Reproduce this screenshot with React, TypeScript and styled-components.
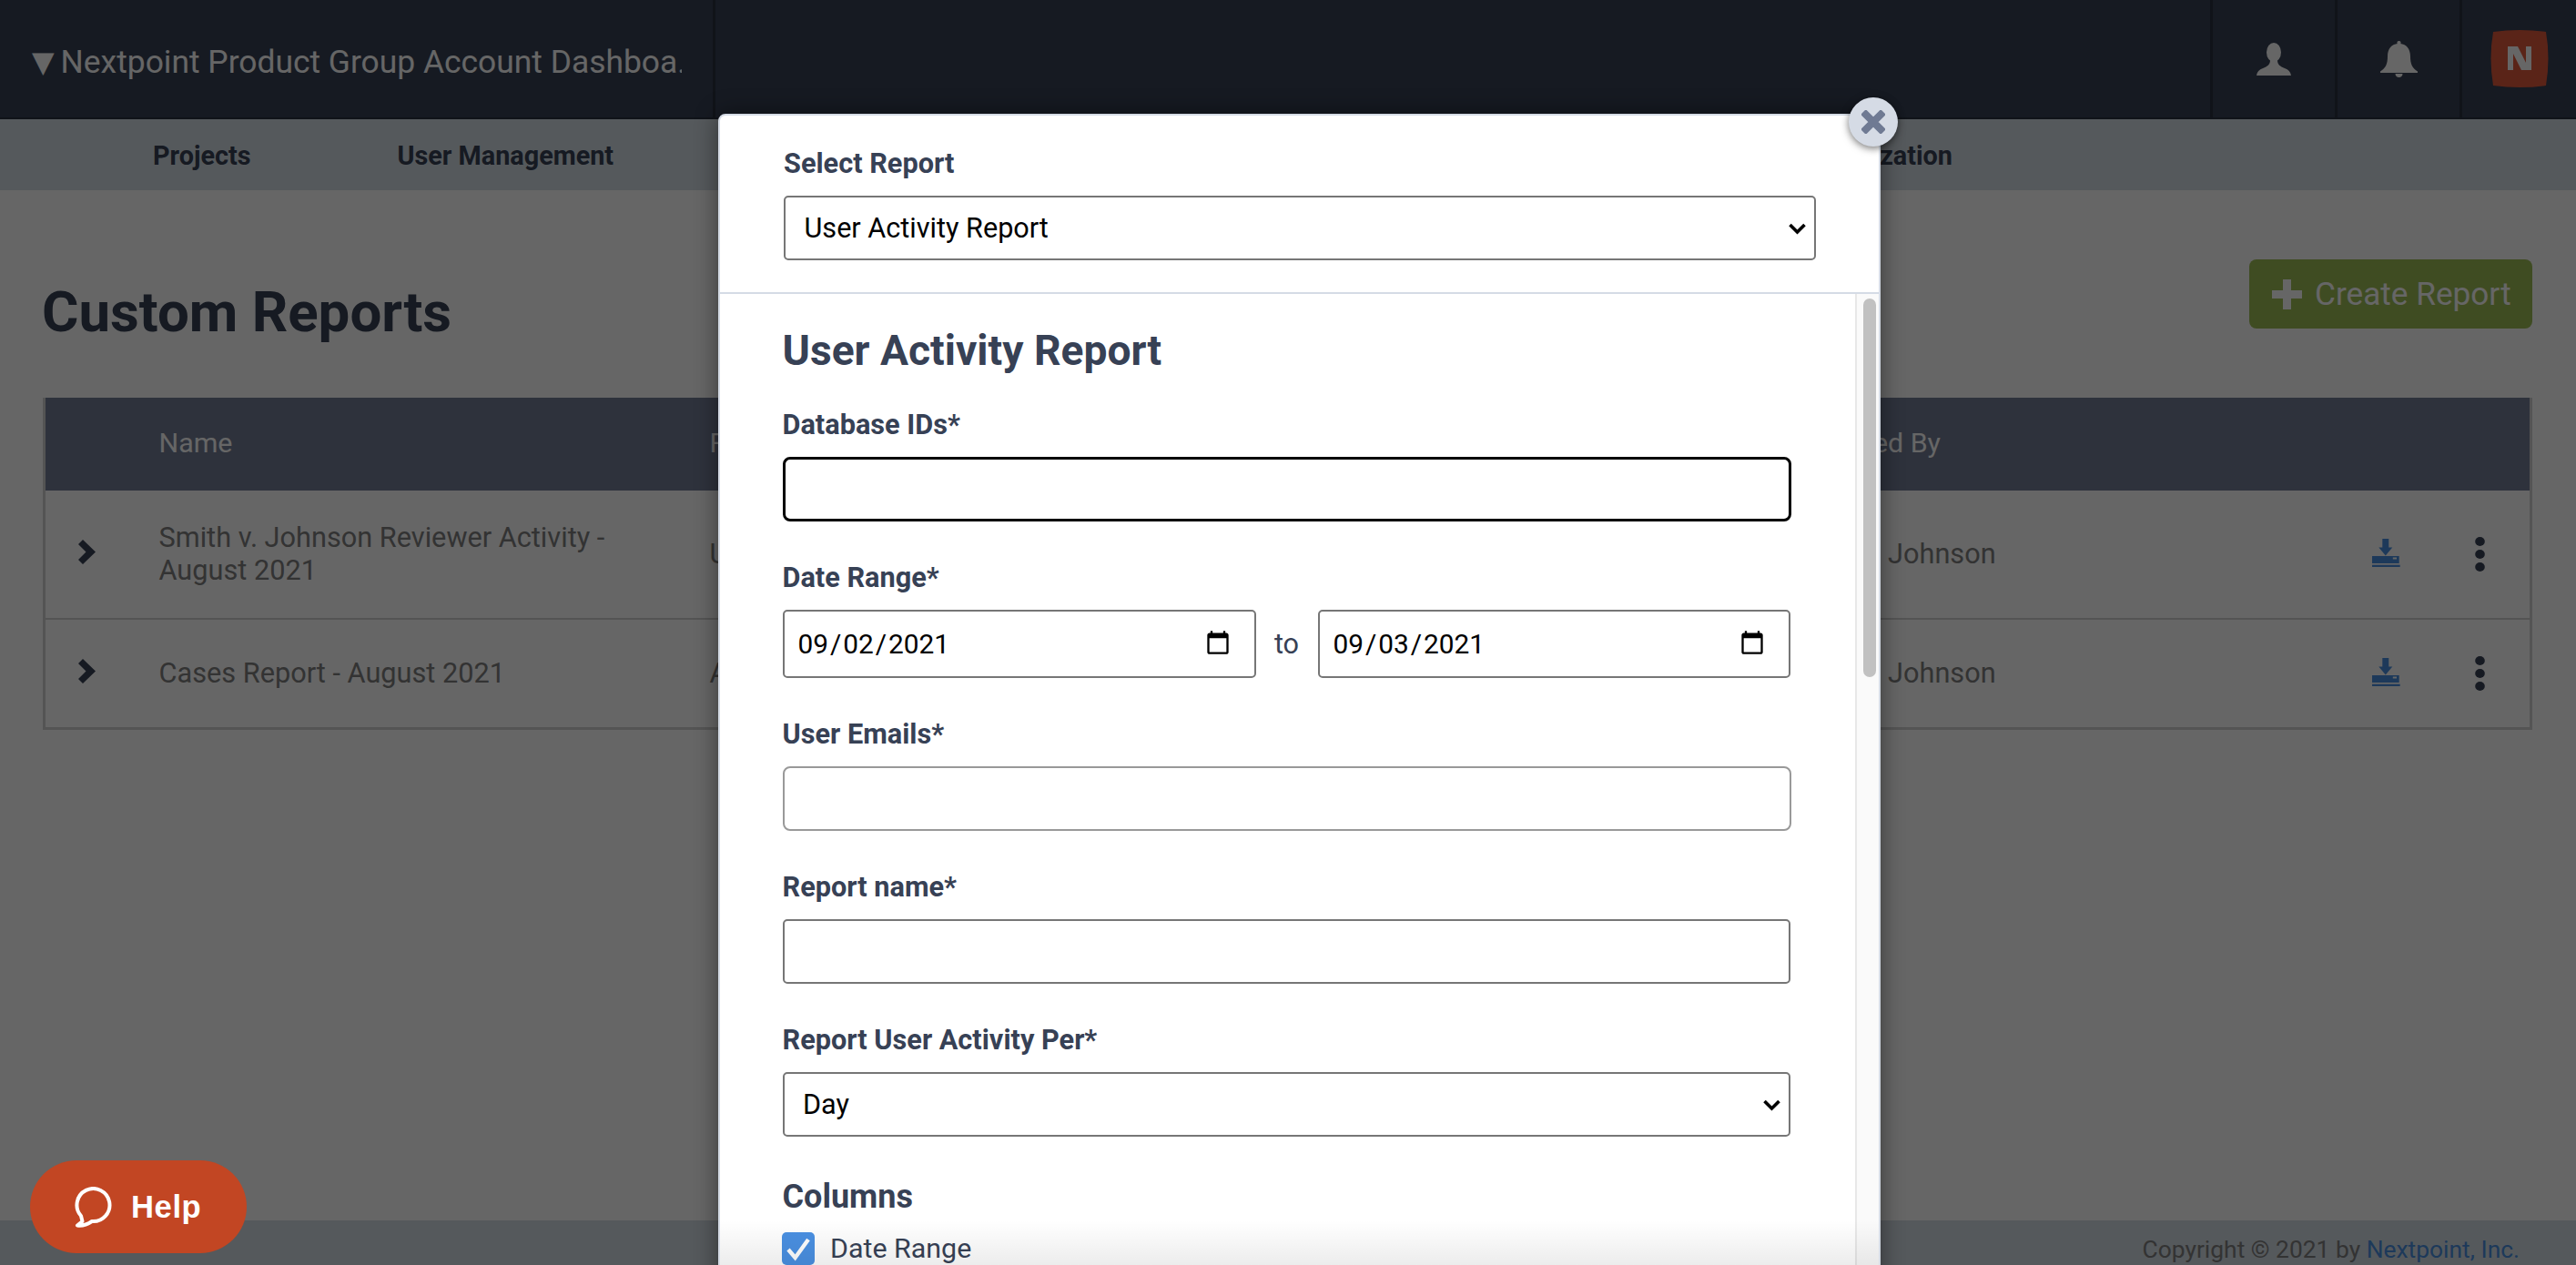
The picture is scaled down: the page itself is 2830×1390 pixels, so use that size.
import React from "react";
import styled, { createGlobalStyle } from "styled-components";

const GlobalStyle = createGlobalStyle`
  html, body {
    margin: 0;
    padding: 0;
    overflow: hidden;
    background: #fff;
  }
  * {
    box-sizing: border-box;
  }
`;

// the reference is a retina capture: everything below is in css px, doubled here
const Page = styled.div`
  zoom: 2;
  position: relative;
  width: 1415px;
  height: 695px;
  overflow: hidden;
  display: flex;
  flex-direction: column;
  font-family: Roboto, "Liberation Sans", sans-serif;
  color: #374155;
`;

const Header = styled.header`
  flex: 0 0 65.5px;
  display: flex;
  background: #374155;
  border-bottom: 1px solid #283040;
`;

const AccountTitle = styled.div`
  width: 393px;
  padding: 3.5px 0 0 17.5px;
  border-right: 1.5px solid #283040;
  display: flex;
  align-items: center;
  gap: 3.5px;
`;

const TitleText = styled.div`
  width: 341px;
  overflow: hidden;
  white-space: nowrap;
  color: #fff;
  font-size: 17.7px;
`;

const Triangle = styled.span`
  color: #fff;
  font-family: "DejaVu Sans", sans-serif;
  font-size: 16px;
`;

const HeaderSpacer = styled.div`
  flex: 1;
`;

const IconCell = styled.div<{ $width: number }>`
  width: ${(p) => p.$width}px;
  border-left: 1.5px solid #283040;
  display: flex;
  align-items: center;
  justify-content: center;
`;

const Nav = styled.nav`
  flex: 0 0 39px;
  display: flex;
  align-items: center;
  gap: 80.5px;
  padding: 1px 342.5px 0 84px;
  background: #d5dee6;
  font-size: 14.4px;
  font-weight: 700;
  white-space: nowrap;
`;

const LastNavItem = styled.span`
  margin-left: auto;
`;

const Main = styled.main`
  flex: 1;
  padding: 38px 24px 0;
  background: #fff;
`;

const TitleRow = styled.div`
  display: flex;
  justify-content: space-between;
  align-items: flex-start;
`;

const PageTitle = styled.h1`
  margin: 11px 0 0 -1px;
  font-size: 30.9px;
  line-height: 36px;
  font-weight: 700;
`;

const CreateButton = styled.button`
  width: 155.5px;
  height: 38px;
  padding: 0 0 0 12.5px;
  display: flex;
  align-items: center;
  gap: 7px;
  border: 0;
  border-radius: 4px;
  background: #9ebe55;
  color: #fff;
  font-family: inherit;
  font-size: 17.6px;
`;

const Table = styled.div`
  margin: 29px 0 0 -0.5px;
  border: 1.5px solid #d2d2d2;
  border-top: 0;
`;

const gridColumns = "62.25px 302.5px 603px 1fr 46px 55px";

const TableHead = styled.div`
  display: grid;
  grid-template-columns: ${gridColumns};
  align-items: center;
  height: 51px;
  padding-bottom: 2px;
  background: #737d96;
  color: #fff;
  font-size: 15.2px;
`;

const TableRow = styled.div<{ $height: number }>`
  display: grid;
  grid-template-columns: ${gridColumns};
  align-items: center;
  height: ${(p) => p.$height}px;
  color: #808080;
  font-size: 15.35px;
  line-height: 18px;
  & + & {
    border-top: 1.25px solid #d2d2d2;
  }
`;

const ChevronCell = styled.div`
  display: flex;
  margin-top: -2.5px;
  padding-left: 18px;
`;

const NameCell = styled.div`
  padding-right: 24px;
`;

const DownloadCell = styled.div`
  display: flex;
  justify-content: center;
  margin: -2px 2px 0 0;
`;

const KebabCell = styled.div`
  display: flex;
  justify-content: center;
`;

const Footer = styled.footer`
  flex: 0 0 24.5px;
  padding: 7.5px 31px 0 0;
  text-align: right;
  background: #d5dee6;
  color: #808080;
  font-size: 13.2px;
  line-height: 17px;
  white-space: nowrap;
`;

const FooterLink = styled.a`
  color: #4a90e2;
`;

const Backdrop = styled.div`
  position: absolute;
  inset: 0;
  background: rgba(0, 0, 0, 0.6);
`;

const Modal = styled.div`
  position: absolute;
  left: 394.5px;
  top: 62.5px;
  width: 638.5px;
  height: 700px;
  display: flex;
  flex-direction: column;
  background: #fff;
  border: 1px solid #d5dbe5;
  border-radius: 4px 4px 0 0;
  box-shadow: 0 0 13px rgba(0, 0, 0, 0.45);
`;

const CloseButton = styled.button`
  position: absolute;
  top: -10px;
  right: -10.5px;
  width: 27px;
  height: 27px;
  padding: 0;
  display: flex;
  align-items: center;
  justify-content: center;
  border: 0;
  border-radius: 50%;
  background: #d5dbe5;
  box-shadow: 0 1px 4px rgba(0, 0, 0, 0.55);
`;

const ModalHead = styled.div`
  flex: 0 0 auto;
  padding: 17.25px 20px 17.5px 35px;
  border-bottom: 1px solid #d5dbe5;
`;

const ModalBody = styled.div`
  flex: 1;
  display: flex;
  overflow: hidden;
`;

const FormArea = styled.div`
  flex: 1;
  padding: 17px 0 0 34.25px;
`;

const ScrollTrack = styled.div`
  flex: 0 0 13px;
  padding: 2.5px 1.5px 0 3.5px;
  background: #fafafa;
  border-left: 1px solid #e8e8e8;
`;

const ScrollThumb = styled.div`
  height: 208px;
  border-radius: 4px;
  background: #c1c1c1;
`;

const FormTitle = styled.h2`
  margin: 0 0 18px;
  font-size: 23.1px;
  line-height: 28px;
  font-weight: 700;
`;

const Field = styled.div`
  margin-bottom: 22px;
`;

const Label = styled.label`
  display: block;
  margin-bottom: 8.5px;
  font-size: 15.35px;
  line-height: 18px;
  font-weight: 700;
`;

const controlBase = `
  display: block;
  height: 35.5px;
  margin: 0;
  background: #fff;
  color: #000;
  font-family: Roboto, "Liberation Sans", sans-serif;
  font-size: 15.3px;
`;

const SelectWrap = styled.div<{ $width: number }>`
  position: relative;
  width: ${(p) => p.$width}px;
`;

const Select = styled.select`
  ${controlBase}
  width: 100%;
  padding: 0 0 0 10.25px;
  border: 1px solid #767676;
  border-radius: 2.5px;
  appearance: none;
`;

const SelectArrow = styled.svg`
  position: absolute;
  top: 15px;
  right: 5.5px;
  pointer-events: none;
`;

const TextInput = styled.input<{ $width: number; $tone: "focus" | "soft" | "plain" }>`
  ${controlBase}
  width: ${(p) => p.$width}px;
  outline: none;
  border: ${(p) =>
    p.$tone === "focus" ? "1.5px solid #000" : p.$tone === "soft" ? "1px solid #999" : "1px solid #767676"};
  border-radius: ${(p) => (p.$tone === "plain" ? "2.5px" : "4px")};
`;

const DateRow = styled.div`
  display: flex;
  align-items: center;
`;

const DateInput = styled.input<{ $width: number }>`
  ${controlBase}
  height: 37.5px;
  width: ${(p) => p.$width}px;
  padding: 0 10.5px 0 6.5px;
  border: 1px solid #767676;
  border-radius: 2.5px;
  font-size: 14.9px;
`;

const ToText = styled.span`
  width: 34px;
  text-align: center;
  font-size: 15.3px;
`;

const ColumnsTitle = styled.h3`
  margin: 0 0 8.5px;
  font-size: 18px;
  line-height: 22px;
  font-weight: 700;
`;

const CheckRow = styled.div`
  display: flex;
  align-items: center;
  gap: 8.5px;
  margin-left: -0.25px;
  font-size: 15.2px;
`;

const CheckBox = styled.span`
  width: 18px;
  height: 18px;
  display: flex;
  align-items: center;
  justify-content: center;
  border-radius: 2.5px;
  background: #4a90e2;
`;

const BottomFade = styled.div`
  position: absolute;
  left: 0;
  right: 0;
  top: 607px;
  height: 26px;
  background: linear-gradient(rgba(0, 0, 0, 0), rgba(0, 0, 0, 0.08));
`;

const HelpButton = styled.button`
  position: absolute;
  left: 16.5px;
  top: 637.5px;
  width: 119px;
  height: 51px;
  padding: 0 0 0 24.5px;
  display: flex;
  align-items: center;
  gap: 10.5px;
  border: 0;
  border-radius: 26px;
  background: #c24623;
  color: #fff;
  font-family: "Liberation Sans", Arial, sans-serif;
  font-size: 17.3px;
  font-weight: 700;
  letter-spacing: 0.3px;
`;

const UserIcon = () => (
  <svg width="19" height="18" viewBox="0 0 38 36" fill="#fff">
    <ellipse cx="19" cy="10.5" rx="8" ry="10.5" />
    <path d="M15 19 C15 24 12 26 7 28 C3 29.5 0.5 32 0 36 H38 C37.5 32 35 29.5 31 28 C26 26 23 24 23 19 Z" />
  </svg>
);

const BellIcon = () => (
  <svg width="20.5" height="20" viewBox="0 0 41 40" fill="#fff">
    <rect x="18.5" y="0" width="4" height="5" rx="1.5" />
    <path d="M20.5 3 C12 3 8 9 8 17 C8 25 6 30 0 33.5 V35 H41 V33.5 C35 30 33 25 33 17 C33 9 29 3 20.5 3 Z" />
    <path d="M16.5 36 H24.5 C24.5 38.5 22.5 40 20.5 40 C18.5 40 16.5 38.5 16.5 36 Z" />
  </svg>
);

const BrandLogo = () => (
  <svg width="33" height="32.5" viewBox="0 0 66 65">
    <path d="M4 3 Q33 -1 62 3 Q67 32 62 62 Q33 66 4 62 Q-1 32 4 3 Z" fill="#e15a3c" />
    <path d="M20 19 H31 L40 37 V19 H46 V45 H35 L26 27 V45 H20 Z" fill="#fff" />
  </svg>
);

const PlusIcon = () => (
  <svg width="16.5" height="16.5" viewBox="0 0 33 33" fill="#fff">
    <path d="M12 0 H21 V12 H33 V21 H21 V33 H12 V21 H0 V12 H12 Z" />
  </svg>
);

const CloseIcon = () => (
  <svg width="13" height="13" viewBox="0 0 26 26" stroke="#6f7a93" strokeWidth="8">
    <path d="M2 2 L24 24 M24 2 L2 24" />
  </svg>
);

const Chevron = () => (
  <svg width="9.5" height="13.5" viewBox="0 0 19 27" fill="#374155">
    <path d="M0 5 L5 0 L19 13.5 L5 27 L0 22 L8.5 13.5 Z" />
  </svg>
);

const DownloadIcon = () => (
  <svg width="15.5" height="15.5" viewBox="0 0 31 31" fill="#4a90e2">
    <path d="M11.3 0 H18.3 V9.5 H22.3 L14.8 18.5 L7.3 9.5 H11.3 Z" />
    <path fillRule="evenodd" d="M0 19 H29.7 V27 H0 Z M22.8 20.5 V22.5 H27 V20.5 Z" />
    <rect x="0" y="28.7" width="30.7" height="2.3" />
  </svg>
);

const KebabIcon = () => (
  <svg width="5.5" height="19" viewBox="0 0 11 38" fill="#374155">
    <ellipse cx="5.5" cy="5" rx="5.3" ry="5" />
    <ellipse cx="5.5" cy="19" rx="5.3" ry="5" />
    <ellipse cx="5.5" cy="33" rx="5.3" ry="5" />
  </svg>
);

const CheckMark = () => (
  <svg width="15" height="15" viewBox="0 0 15 15" fill="none" stroke="#fff" strokeWidth="2.2">
    <path d="M2 8 L5.8 12.5 L13 2.5" />
  </svg>
);

const ChatIcon = () => (
  <svg width="20.5" height="22.5" viewBox="0 0 41 45" fill="none" stroke="#fff" strokeWidth="4" strokeLinejoin="round">
    <path d="M19 38 A18 18 0 1 0 7 32 L8.5 38 L3 42.5 Q11 43.5 19 38 Z" />
  </svg>
);

const FormSelect = ({ width, label }: { width: number; label: string }) => (
  <SelectWrap $width={width}>
    <Select defaultValue={label}>
      <option value={label}>{label}</option>
    </Select>
    <SelectArrow width="9.5" height="6.5" viewBox="0 0 19 13" fill="none" stroke="#000" strokeWidth="3.6">
      <path d="M1.5 2 L9.5 10 L17.5 2" />
    </SelectArrow>
  </SelectWrap>
);

const reports = [
  { name: "Smith v. Johnson Reviewer Activity - August 2021", type: "User", owner: "Adam Johnson", height: 70 },
  { name: "Cases Report - August 2021", type: "All", owner: "Adam Johnson", height: 60 },
];

export default function App() {
  return (
    <Page>
      <GlobalStyle />
      <Header>
        <AccountTitle>
          <Triangle>▼</Triangle>
          <TitleText>Nextpoint Product Group Account Dashboa...</TitleText>
        </AccountTitle>
        <HeaderSpacer />
        <IconCell $width={68.5}>
          <UserIcon />
        </IconCell>
        <IconCell $width={68.5}>
          <BellIcon />
        </IconCell>
        <IconCell $width={64}>
          <BrandLogo />
        </IconCell>
      </Header>
      <Nav>
        <span>Projects</span>
        <span>User Management</span>
        <LastNavItem>Organization</LastNavItem>
      </Nav>
      <Main>
        <TitleRow>
          <PageTitle>Custom Reports</PageTitle>
          <CreateButton>
            <PlusIcon />
            Create Report
          </CreateButton>
        </TitleRow>
        <Table>
          <TableHead>
            <div />
            <div>Name</div>
            <div>Form</div>
            <div>Created By</div>
          </TableHead>
          {reports.map((r) => (
            <TableRow key={r.name} $height={r.height}>
              <ChevronCell>
                <Chevron />
              </ChevronCell>
              <NameCell>{r.name}</NameCell>
              <div>{r.type}</div>
              <div>{r.owner}</div>
              <DownloadCell>
                <DownloadIcon />
              </DownloadCell>
              <KebabCell>
                <KebabIcon />
              </KebabCell>
            </TableRow>
          ))}
        </Table>
      </Main>
      <Footer>
        Copyright © 2021 by <FooterLink>Nextpoint, Inc.</FooterLink>
      </Footer>
      <Backdrop>
        <Modal>
          <CloseButton>
            <CloseIcon />
          </CloseButton>
          <ModalHead>
            <Label>Select Report</Label>
            <FormSelect width={567} label="User Activity Report" />
          </ModalHead>
          <ModalBody>
            <FormArea>
              <FormTitle>User Activity Report</FormTitle>
              <Field>
                <Label>Database IDs*</Label>
                <TextInput $width={554} $tone="focus" />
              </Field>
              <Field>
                <Label>Date Range*</Label>
                <DateRow>
                  <DateInput type="date" $width={260} defaultValue="2021-09-02" />
                  <ToText>to</ToText>
                  <DateInput type="date" $width={259.5} defaultValue="2021-09-03" />
                </DateRow>
              </Field>
              <Field>
                <Label>User Emails*</Label>
                <TextInput $width={554} $tone="soft" />
              </Field>
              <Field>
                <Label>Report name*</Label>
                <TextInput $width={553.5} $tone="plain" />
              </Field>
              <Field>
                <Label>Report User Activity Per*</Label>
                <FormSelect width={553.5} label="Day" />
              </Field>
              <ColumnsTitle>Columns</ColumnsTitle>
              <CheckRow>
                <CheckBox>
                  <CheckMark />
                </CheckBox>
                Date Range
              </CheckRow>
            </FormArea>
            <ScrollTrack>
              <ScrollThumb />
            </ScrollTrack>
          </ModalBody>
          <BottomFade />
        </Modal>
        <HelpButton>
          <ChatIcon />
          Help
        </HelpButton>
      </Backdrop>
    </Page>
  );
}
